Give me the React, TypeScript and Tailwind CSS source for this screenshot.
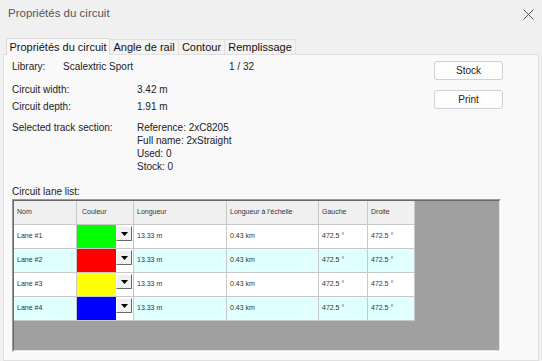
import React from "react";

const lanes = [
  { name: "Lane #1", color: "#00ff00", bg: "bg-white" },
  { name: "Lane #2", color: "#ff0000", bg: "bg-[#e0ffff]" },
  { name: "Lane #3", color: "#ffff00", bg: "bg-white" },
  { name: "Lane #4", color: "#0000ff", bg: "bg-[#e0ffff]" },
];

function Cell({ w, children, className = "" }: { w: string; children?: React.ReactNode; className?: string }) {
  return (
    <div className={`${w} h-full shrink-0 border-r border-[#c8c8c8] flex items-center pl-[3px] ${className}`}>
      {children}
    </div>
  );
}

export default function App() {
  return (
    <div
      className="w-[542px] h-[361px] bg-[#f0f0f0] overflow-hidden flex flex-col text-[#1a1a1a]"
      style={{ fontFamily: '"Liberation Sans", Arial, sans-serif' }}
    >
      {/* Title bar */}
      <div className="h-[28px] shrink-0 flex items-center justify-between pl-[8px] pr-[7px]">
        <span className="text-[11.5px] text-[#555]">Propriétés du circuit</span>
        <svg width="11" height="11" viewBox="0 0 11 11" className="mr-[1px]">
          <path d="M0.5 0.5 L10.5 10.5 M10.5 0.5 L0.5 10.5" stroke="#555" strokeWidth="1" />
        </svg>
      </div>

      {/* Tabs */}
      <div className="mt-[10px] h-[16px] shrink-0 flex items-end pl-[6px] relative z-10">
        <div className="h-[17px] w-[104px] bg-[#f9f9f9] border border-b-0 border-[#d9d9d9] flex items-center justify-center text-[11px] text-[#111] translate-y-[1px]">
          Propriétés du circuit
        </div>
        <div className="h-[15px] w-[69px] bg-[#f2f2f2] border-t border-r border-[#e0e0e0] flex items-center justify-center text-[11px] text-[#111]">
          Angle de rail
        </div>
        <div className="h-[15px] w-[46px] bg-[#f2f2f2] border-t border-r border-[#e0e0e0] flex items-center justify-center text-[11px] text-[#111]">
          Contour
        </div>
        <div className="h-[15px] w-[71px] bg-[#f2f2f2] border-t border-r border-[#e0e0e0] flex items-center justify-center text-[11px] text-[#111]">
          Remplissage
        </div>
      </div>

      {/* Panel */}
      <div className="flex-1 mx-[3px] bg-[#f9f9f9] border border-[#e0e0e0] flex flex-col pl-[8px] text-[10px] text-[#222]">
        <div className="flex">
          <div className="w-[422px] shrink-0 pt-[6px]">
            <div className="flex leading-[12px]">
              <span className="w-[51px]">Library:</span>
              <span className="w-[166px]">Scalextric Sport</span>
              <span>1 / 32</span>
            </div>
            <div className="flex leading-[12px] mt-[11px]">
              <span className="w-[125px]">Circuit width:</span>
              <span>3.42 m</span>
            </div>
            <div className="flex leading-[12px] mt-[5px]">
              <span className="w-[125px]">Circuit depth:</span>
              <span>1.91 m</span>
            </div>
            <div className="flex leading-[13px] mt-[8px]">
              <span className="w-[125px]">Selected track section:</span>
              <div className="flex flex-col">
                <span>Reference: 2xC8205</span>
                <span>Full name: 2xStraight</span>
                <span>Used: 0</span>
                <span>Stock: 0</span>
              </div>
            </div>
          </div>
          <div className="flex flex-col gap-[10px] pt-[6px]">
            <button className="w-[69px] h-[19px] bg-[#fdfdfd] border border-[#d0d0d0] rounded-[3px] text-[10px] text-[#222] flex items-center justify-center">
              Stock
            </button>
            <button className="w-[69px] h-[19px] bg-[#fdfdfd] border border-[#d0d0d0] rounded-[3px] text-[10px] text-[#222] flex items-center justify-center">
              Print
            </button>
          </div>
        </div>

        <div className="mt-[13px] leading-[12px]">Circuit lane list:</div>

        {/* Grid frame */}
        <div className="mt-[1px] w-[489px] h-[153px] border border-t-[#9a9a9a] border-l-[#9a9a9a] border-r-[#ffffff] border-b-[#ffffff]">
          <div className="w-full h-full bg-[#a0a0a0] border border-t-[#696969] border-l-[#696969] border-r-[#e3e3e3] border-b-[#e3e3e3]">
            <div className="w-[401px] text-[7px] text-[#333]">
              <div className="h-[24px] flex bg-[#f0f0f0] border-b border-[#c8c8c8]">
                <Cell w="w-[63px]">Nom</Cell>
                <Cell w="w-[57px]" className="pl-[5px]">Couleur</Cell>
                <Cell w="w-[93px]">Longueur</Cell>
                <Cell w="w-[92px]">Longueur à l'échelle</Cell>
                <Cell w="w-[49px]">Gauche</Cell>
                <Cell w="w-[47px]">Droite</Cell>
              </div>
              {lanes.map((l) => (
                <div key={l.name} className={`h-[24px] flex ${l.bg} border-b border-[#c8c8c8]`}>
                  <Cell w="w-[63px]">{l.name}</Cell>
                  <div className="w-[57px] h-full shrink-0 border-r border-[#c8c8c8] flex">
                    <div className="w-[39px] h-full" style={{ backgroundColor: l.color }} />
                    <div className="w-[17px] h-full bg-white flex flex-col">
                      <div className="w-[16px] h-[15px] mt-[1px] bg-[#f0f0f0] border border-t-[#ffffff] border-l-[#ffffff] border-r-[#696969] border-b-[#696969] flex items-center justify-center">
                        <svg width="7" height="4" viewBox="0 0 7 4">
                          <path d="M0 0 H7 L3.5 4 Z" fill="#000" />
                        </svg>
                      </div>
                    </div>
                  </div>
                  <Cell w="w-[93px]">13.33 m</Cell>
                  <Cell w="w-[92px]">0.43 km</Cell>
                  <Cell w="w-[49px]">472.5 °</Cell>
                  <Cell w="w-[47px]">472.5 °</Cell>
                </div>
              ))}
            </div>
          </div>
        </div>
      </div>
    </div>
  );
}
